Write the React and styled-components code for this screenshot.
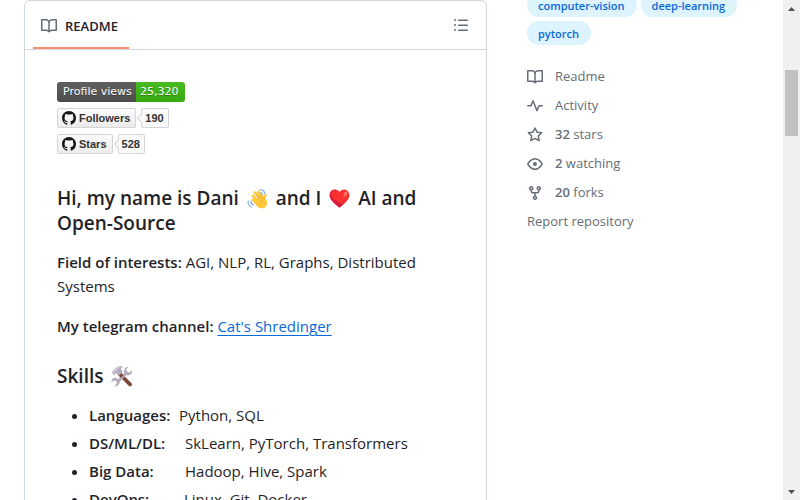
import React from "react";
import styled, { createGlobalStyle } from "styled-components";

const GlobalStyle = createGlobalStyle`
  *, *::before, *::after { box-sizing: border-box; }
  body {
    margin: 0;
    background: #ffffff;
    color: #1f2328;
    font-family: "Open Sans", "Noto Sans", sans-serif;
    font-size: 15px;
    line-height: 24px;
  }
`;

const Window = styled.div`
  display: flex;
  height: 100vh;
  overflow: hidden;
`;

const Page = styled.div`
  flex: 1;
  min-width: 0;
  display: grid;
  grid-template-columns: minmax(0, 1fr) 232px;
  column-gap: 40px;
  align-items: start;
  padding: 0 24px;
`;

const ReadmeCard = styled.main`
  border: 1px solid #d0d7de;
  border-radius: 6px;
`;

const CardHeader = styled.div`
  display: flex;
  align-items: stretch;
  justify-content: space-between;
  height: 49px;
  padding: 0 9px 0 8px;
  border-bottom: 1px solid #d0d7de;
`;

const Tab = styled.a`
  display: flex;
  align-items: center;
  gap: 8px;
  min-width: 96px;
  padding: 3px 8px 0;
  border-bottom: 2px solid #fd8c73;
  color: #1f2328;
  font-size: 13px;
  font-weight: 600;
  text-decoration: none;
`;

const IconButton = styled.button`
  display: flex;
  align-items: center;
  justify-content: center;
  width: 32px;
  padding: 0;
  border: 0;
  background: none;
  color: #656d76;
  cursor: pointer;
`;

const Glyph = styled.svg`
  display: block;
  flex: none;
  fill: ${(p) => p.$color || "#656d76"};
`;

const Article = styled.article`
  padding: 32px;
`;

const Badges = styled.div`
  display: flex;
  flex-direction: column;
  align-items: flex-start;
  gap: 6px;
  margin-bottom: 32px;
`;

const ViewsBadge = styled.a`
  display: flex;
  height: 20px;
  overflow: hidden;
  border-radius: 3px;
  color: #ffffff;
  font-family: "DejaVu Sans", sans-serif;
  font-size: 11px;
  line-height: 20px;
  text-decoration: none;
  text-shadow: 0 1px 0 rgba(1, 1, 1, 0.3);
`;

const BadgePart = styled.span`
  width: ${(p) => p.$width}px;
  padding-left: ${(p) => p.$inset}px;
  white-space: nowrap;
  background: linear-gradient(${(p) => p.$from}, ${(p) => p.$to});
`;

const SocialBadge = styled.span`
  display: flex;
  gap: 5px;
  color: #333333;
  font-family: "Liberation Sans", Arial, sans-serif;
  font-size: 11px;
  font-weight: 700;
  line-height: 18px;
`;

const SocialButton = styled.a`
  display: flex;
  align-items: center;
  gap: 3px;
  height: 20px;
  padding: 0 5px 0 4px;
  border: 1px solid #d5d5d5;
  border-radius: 2px;
  background: linear-gradient(#fcfcfc, #ebebeb);
  color: inherit;
  text-decoration: none;
`;

const SocialCount = styled.a`
  position: relative;
  height: 20px;
  padding: 0 4px 0 3px;
  border: 1px solid #d5d5d5;
  border-radius: 2px;
  background: #fafafa;
  color: inherit;
  text-decoration: none;

  &::before {
    content: "";
    position: absolute;
    left: -4px;
    top: 6px;
    width: 6px;
    height: 6px;
    border: solid #d5d5d5;
    border-width: 0 0 1px 1px;
    background: #fafafa;
    transform: rotate(45deg);
  }
`;

const Heading = styled.h3`
  margin: 0 0 14px;
  font-size: 19px;
  font-weight: 600;
  line-height: 25px;
`;

const SkillsHeading = styled(Heading)`
  margin-top: 26px;
`;

const Emoji = styled.svg`
  width: 21px;
  height: 21px;
  margin: 0 3px;
  vertical-align: -4px;
`;

const Paragraph = styled.p`
  margin: 0 0 16px;
`;

const Strong = styled.strong`
  font-weight: 600;
`;

const TextLink = styled.a`
  color: #0969da;
  text-decoration: underline;
  text-underline-offset: 3px;
`;

const SkillList = styled.ul`
  display: flex;
  flex-direction: column;
  gap: 4px;
  margin: 0;
  padding-left: 32px;
`;

const SkillName = styled(Strong)`
  display: inline-block;
  width: ${(p) => p.$width}px;
`;

const Sidebar = styled.aside`
  color: #656d76;
  font-size: 13px;
`;

const Topics = styled.div`
  display: flex;
  flex-wrap: wrap;
  gap: 4px;
  margin: -7px 0 21px;
`;

const Topic = styled.a`
  padding: 1px 12px 0 11px;
  border-radius: 12px;
  background: #ddf4ff;
  color: #0969da;
  font-size: 11px;
  font-weight: 600;
  line-height: 23px;
  text-decoration: none;
`;

const Facts = styled.div`
  display: flex;
  flex-direction: column;
  gap: 8px;
`;

const Fact = styled.a`
  display: flex;
  align-items: center;
  gap: 12px;
  color: inherit;
  line-height: 21px;
  text-decoration: none;
`;

const Scrollbar = styled.div`
  display: flex;
  flex-direction: column;
  width: 17px;
  background: #f0f0f0;
`;

const ScrollArrow = styled.button`
  display: grid;
  place-items: center;
  height: 17px;
  padding: 0;
  border: 0;
  background: none;
`;

const Track = styled.div`
  flex: 1;
  padding: 53px 2px 0;
`;

const Thumb = styled.div`
  height: 66px;
  background: #c1c1c1;
`;

const paths = {
  book: "M0 1.75A.75.75 0 0 1 .75 1h4.253c1.227 0 2.317.59 3 1.501A3.743 3.743 0 0 1 11.006 1h4.245a.75.75 0 0 1 .75.75v10.5a.75.75 0 0 1-.75.75h-4.507a2.25 2.25 0 0 0-1.591.659l-.622.621a.75.75 0 0 1-1.06 0l-.622-.621A2.25 2.25 0 0 0 5.258 13H.75a.75.75 0 0 1-.75-.75Zm7.251 10.324.004-5.073-.002-2.253A2.25 2.25 0 0 0 5.003 2.5H1.5v9h3.757a3.75 3.75 0 0 1 1.994.574ZM8.755 4.75l-.004 7.322a3.752 3.752 0 0 1 1.992-.572H14.5v-9h-3.495a2.25 2.25 0 0 0-2.25 2.25Z",
  pulse: "M6 2c.306 0 .582.187.696.471L10 10.731l1.304-3.26A.751.751 0 0 1 12 7h3.25a.75.75 0 0 1 0 1.5h-2.742l-1.812 4.528a.751.751 0 0 1-1.392 0L6 4.77 4.696 8.03A.75.75 0 0 1 4 8.5H.75a.75.75 0 0 1 0-1.5h2.742l1.812-4.529A.751.751 0 0 1 6 2Z",
  star: "M8 .25a.75.75 0 0 1 .673.418l1.882 3.815 4.21.612a.75.75 0 0 1 .416 1.279l-3.046 2.97.719 4.192a.751.751 0 0 1-1.088.791L8 12.347l-3.766 1.98a.75.75 0 0 1-1.088-.79l.72-4.194L.818 6.374a.75.75 0 0 1 .416-1.28l4.21-.611L7.327.668A.75.75 0 0 1 8 .25Zm0 2.445L6.615 5.5a.75.75 0 0 1-.564.41l-3.097.45 2.24 2.184a.75.75 0 0 1 .216.664l-.528 3.084 2.769-1.456a.75.75 0 0 1 .698 0l2.77 1.456-.53-3.084a.75.75 0 0 1 .216-.664l2.24-2.183-3.096-.45a.75.75 0 0 1-.564-.41L8 2.694Z",
  eye: "M8 2c1.981 0 3.671.992 4.933 2.078 1.27 1.091 2.187 2.345 2.637 3.023a1.62 1.62 0 0 1 0 1.798c-.45.678-1.367 1.932-2.637 3.023C11.67 13.008 9.981 14 8 14c-1.981 0-3.671-.992-4.933-2.078C1.797 10.83.88 9.576.43 8.898a1.62 1.62 0 0 1 0-1.798c.45-.677 1.367-1.931 2.637-3.022C4.33 2.992 6.019 2 8 2ZM1.679 7.932a.12.12 0 0 0 0 .136c.411.622 1.241 1.75 2.366 2.717C5.176 11.758 6.527 12.5 8 12.5c1.473 0 2.825-.742 3.955-1.715 1.124-.967 1.954-2.096 2.366-2.717a.12.12 0 0 0 0-.136c-.412-.621-1.242-1.75-2.366-2.717C10.824 4.242 9.473 3.5 8 3.5c-1.473 0-2.825.742-3.955 1.715-1.124.967-1.954 2.096-2.366 2.717ZM8 10a2 2 0 1 1-.001-3.999A2 2 0 0 1 8 10Z",
  fork: "M5 5.372v.878c0 .414.336.75.75.75h4.5a.75.75 0 0 0 .75-.75v-.878a2.25 2.25 0 1 1 1.5 0v.878a2.25 2.25 0 0 1-2.25 2.25h-1.5v2.128a2.251 2.251 0 1 1-1.5 0V8.5h-1.5A2.25 2.25 0 0 1 3.5 6.25v-.878a2.25 2.25 0 1 1 1.5 0ZM5 3.25a.75.75 0 1 0-1.5 0 .75.75 0 0 0 1.5 0Zm6.75.75a.75.75 0 1 0 0-1.5.75.75 0 0 0 0 1.5Zm-3 8.75a.75.75 0 1 0-1.5 0 .75.75 0 0 0 1.5 0Z",
  list: "M5.75 2.5h8.5a.75.75 0 0 1 0 1.5h-8.5a.75.75 0 0 1 0-1.5Zm0 5h8.5a.75.75 0 0 1 0 1.5h-8.5a.75.75 0 0 1 0-1.5Zm0 5h8.5a.75.75 0 0 1 0 1.5h-8.5a.75.75 0 0 1 0-1.5ZM2 14a1 1 0 1 1 0-2 1 1 0 0 1 0 2Zm1-6a1 1 0 1 1-2 0 1 1 0 0 1 2 0ZM2 4a1 1 0 1 1 0-2 1 1 0 0 1 0 2Z",
  github: "M8 0C3.58 0 0 3.58 0 8c0 3.54 2.29 6.53 5.47 7.59.4.07.55-.17.55-.38 0-.19-.01-.82-.01-1.49-2.01.37-2.53-.49-2.69-.94-.09-.23-.48-.94-.82-1.13-.28-.15-.68-.52-.01-.53.63-.01 1.08.58 1.23.82.72 1.21 1.87.87 2.33.66.07-.52.28-.87.51-1.07-1.78-.2-3.64-.89-3.64-3.95 0-.87.31-1.59.82-2.15-.08-.2-.36-1.02.08-2.12 0 0 .67-.21 2.2.82.64-.18 1.32-.27 2-.27.68 0 1.36.09 2 .27 1.53-1.04 2.2-.82 2.2-.82.44 1.1.16 1.92.08 2.12.51.56.82 1.27.82 2.15 0 3.07-1.87 3.75-3.65 3.95.29.25.54.73.54 1.48 0 1.07-.01 1.93-.01 2.2 0 .21.15.46.55.38A8.013 8.013 0 0 0 16 8c0-4.42-3.58-8-8-8z",
};

const Icon = ({ name, size = 16, color }) => (
  <Glyph viewBox="0 0 16 16" width={size} height={size} $color={color} aria-hidden="true">
    <path d={paths[name]} />
  </Glyph>
);

const WavingHand = () => (
  <Emoji viewBox="0 0 32 32" role="img" aria-label="waving hand">
    <g fill="none" stroke="#74a7f5" strokeWidth="1.8" strokeLinecap="round">
      <path d="M19 3c4-1 7 1 8 5M19 7c2 0 4 1 5 3M2 20c-1 4 1 8 5 9M6 20c0 3 1 5 4 6" />
    </g>
    <g stroke="#ffc83d" strokeWidth="4" strokeLinecap="round" fill="none">
      <path d="M9 12l9 10M12 7l10 12M17 6l8 11M9 18l8 8M27 19c-1-3-1-6 1-8" />
    </g>
    <path d="M13 16l11-5 3 4c4 4 5 9 2 13-3 4-9 4-13 0l-6-7z" fill="#ffc83d" />
    <path d="M15 12l4 5M19 11l3 4M26 15c-3 2-4 4-3 7" fill="none" stroke="#e59a1a" strokeWidth="1" strokeLinecap="round" />
  </Emoji>
);

const Heart = () => (
  <Emoji viewBox="0 0 32 32" role="img" aria-label="red heart">
    <path d="M16 6C12 0 2 1 1 10c-1 8 8 14 15 20 7-6 16-12 15-20C30 1 20 0 16 6z" fill="#f8312f" />
    <path d="M16 6C12 0 2 1 1 10c-1 8 8 14 15 20 2-2 4-3 6-5C13 21 3 16 3 9c0-4 4-6 8-6z" fill="#ca0b4a" opacity=".6" />
    <ellipse cx="25" cy="9" rx="2.6" ry="4.2" transform="rotate(35 25 9)" fill="#f37366" />
  </Emoji>
);

const Tools = () => (
  <Emoji viewBox="0 0 32 32" role="img" aria-label="hammer and wrench">
    <path d="M12 11l17 17" stroke="#7d4533" strokeWidth="5.5" strokeLinecap="round" />
    <path d="M9 25L25 9" stroke="#b4acbc" strokeWidth="4.5" />
    <path d="M27 1l-4 4 1 4 4 1 4-4c1 5-3 9-8 8l-4-4c-1-5 2-9 7-9zM5 31l4-4-1-4-4-1-3 3c-1-5 3-8 7-7l5 5c1 5-3 9-8 8z" fill="#b4acbc" />
    <path d="M13 12l4 4" stroke="#7d4533" strokeWidth="5" />
    <path d="M1 9l8-7c3-2 6-2 9-1l-3 3 3 5-6 6-4-4-4 3z" fill="#b4acbc" />
    <path d="M1 9l8-7c3-2 6-2 9-1l-5 2-9 9z" fill="#cdc4d6" />
  </Emoji>
);

const socialBadges = [
  { label: "Followers", count: "190" },
  { label: "Stars", count: "528" },
];

const skills = [
  { name: "Languages:", items: "Python, SQL", width: 90 },
  { name: "DS/ML/DL:", items: "SkLearn, PyTorch, Transformers", width: 96 },
  { name: "Big Data:", items: "Hadoop, Hive, Spark", width: 96 },
  { name: "DevOps:", items: "Linux, Git, Docker", width: 95 },
];

const facts = [
  { icon: "book", text: "Readme" },
  { icon: "pulse", text: "Activity" },
  { icon: "star", value: "32", text: "stars" },
  { icon: "eye", value: "2", text: "watching" },
  { icon: "fork", value: "20", text: "forks" },
];

export default function App() {
  return (
    <Window>
      <GlobalStyle />
      <Page>
        <ReadmeCard>
          <CardHeader>
            <Tab href="#readme">
              <Icon name="book" />
              README
            </Tab>
            <IconButton type="button" aria-label="Outline">
              <Icon name="list" />
            </IconButton>
          </CardHeader>
          <Article>
            <Badges>
              <ViewsBadge href="#views">
                <BadgePart $width={79} $inset={6} $from="#5f5f5f" $to="#4d4d4d">Profile views</BadgePart>
                <BadgePart $width={49} $inset={4} $from="#47bb1f" $to="#37a90f">25,320</BadgePart>
              </ViewsBadge>
              {socialBadges.map((b) => (
                <SocialBadge key={b.label}>
                  <SocialButton href="#profile">
                    <Icon name="github" size={14} color="#181717" />
                    {b.label}
                  </SocialButton>
                  <SocialCount href="#count">{b.count}</SocialCount>
                </SocialBadge>
              ))}
            </Badges>
            <Heading>
              Hi, my name is Dani <WavingHand /> and I <Heart /> AI and Open-Source
            </Heading>
            <Paragraph>
              <Strong>Field of interests:</Strong> AGI, NLP, RL, Graphs, Distributed Systems
            </Paragraph>
            <Paragraph>
              <Strong>My telegram channel:</Strong> <TextLink href="#telegram">Cat's Shredinger</TextLink>
            </Paragraph>
            <SkillsHeading>
              Skills <Tools />
            </SkillsHeading>
            <SkillList>
              {skills.map((s) => (
                <li key={s.name}>
                  <SkillName $width={s.width}>{s.name}</SkillName>
                  {s.items}
                </li>
              ))}
            </SkillList>
          </Article>
        </ReadmeCard>
        <Sidebar>
          <Topics>
            <Topic href="#computer-vision">computer-vision</Topic>
            <Topic href="#deep-learning">deep-learning</Topic>
            <Topic href="#pytorch">pytorch</Topic>
          </Topics>
          <Facts>
            {facts.map((f) => (
              <Fact key={f.text} href={`#${f.text}`}>
                <Icon name={f.icon} />
                <span>
                  {f.value && <Strong>{f.value} </Strong>}
                  {f.text}
                </span>
              </Fact>
            ))}
            <Fact href="#report">Report repository</Fact>
          </Facts>
        </Sidebar>
      </Page>
      <Scrollbar>
        <ScrollArrow type="button" aria-label="Scroll up">
          <Glyph width="7" height="4" viewBox="0 0 7 4" $color="#505050"><path d="M0 4l3.5-4L7 4z" /></Glyph>
        </ScrollArrow>
        <Track>
          <Thumb />
        </Track>
        <ScrollArrow type="button" aria-label="Scroll down">
          <Glyph width="7" height="4" viewBox="0 0 7 4" $color="#505050"><path d="M0 0h7L3.5 4z" /></Glyph>
        </ScrollArrow>
      </Scrollbar>
    </Window>
  );
}
